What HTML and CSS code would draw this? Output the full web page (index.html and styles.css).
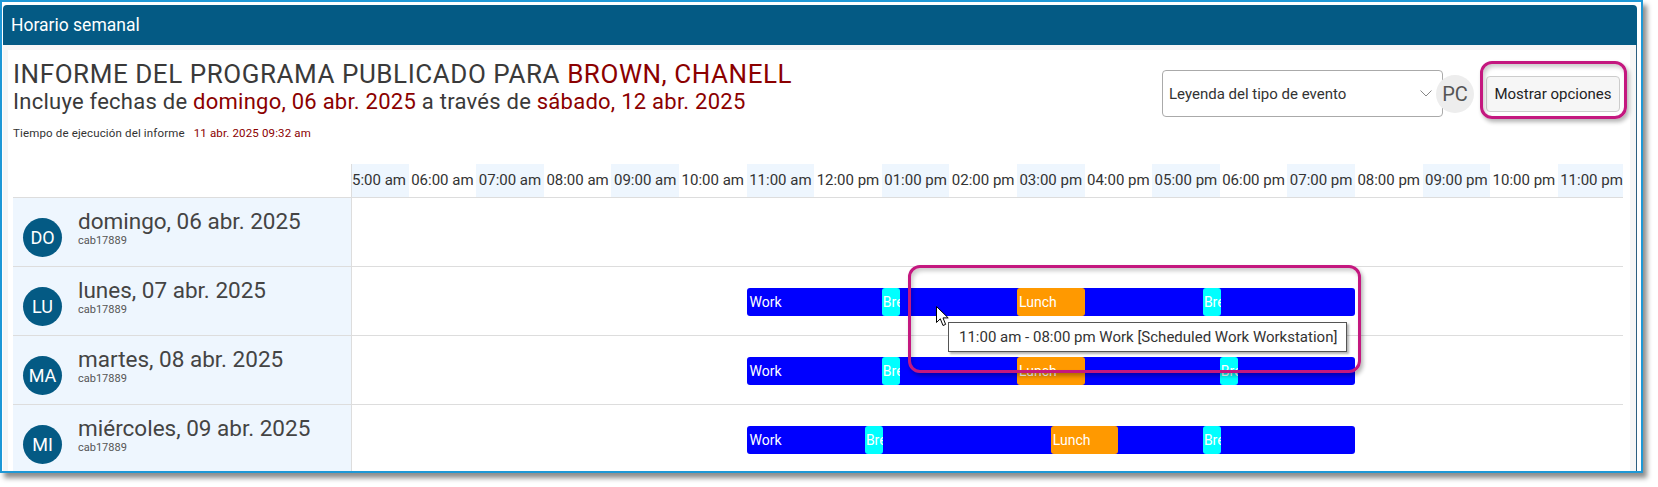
FILE: index.html
```html
<!DOCTYPE html>
<html lang="es">
<head>
    <meta charset="UTF-8">
    <meta name="viewport" content="width=device-width, initial-scale=1.0">
    <title>Horario semanal</title>
    <link rel="stylesheet" href="styles.css">
</head>
<body>
    <div class="frame">
        <div class="window">
            <div class="window-bar">Horario semanal</div>
            <div class="window-body">
                <div class="content">
                    <div class="report-head">
                        <div class="report-title">
                            <h1>INFORME DEL PROGRAMA PUBLICADO PARA <span class="hl">BROWN, CHANELL</span></h1>
                            <h2>Incluye fechas de <span class="hl">domingo, 06 abr. 2025</span> a través de <span class="hl">sábado, 12 abr. 2025</span></h2>
                            <p class="run-time">Tiempo de ejecución del informe <span class="hl">11 abr. 2025 09:32 am</span></p>
                        </div>
                        <div class="report-tools">
                            <div class="legend-select">
                                <span>Leyenda del tipo de evento</span>
                                <svg width="12" height="7" viewBox="0 0 12 7"><polyline points="0.5,0.5 6,6 11.5,0.5" fill="none" stroke="#888" stroke-width="1"/></svg>
                            </div>
                            <div class="user-badge">PC</div>
                            <button class="options-btn">Mostrar opciones</button>
                        </div>
                    </div>

                    <div class="schedule">
                        <div class="corner"></div>
                        <div class="hours">
                            <div class="hours-track">
                                <span>05:00 am</span><span>06:00 am</span><span>07:00 am</span><span>08:00 am</span>
                                <span>09:00 am</span><span>10:00 am</span><span>11:00 am</span><span>12:00 pm</span>
                                <span>01:00 pm</span><span>02:00 pm</span><span>03:00 pm</span><span>04:00 pm</span>
                                <span>05:00 pm</span><span>06:00 pm</span><span>07:00 pm</span><span>08:00 pm</span>
                                <span>09:00 pm</span><span>10:00 pm</span><span>11:00 pm</span>
                            </div>
                        </div>

                        <div class="day">
                            <div class="day-badge">DO</div>
                            <div class="day-text"><div class="day-name">domingo, 06 abr. 2025</div><div class="day-user">cab17889</div></div>
                        </div>
                        <div class="lane"></div>

                        <div class="day">
                            <div class="day-badge">LU</div>
                            <div class="day-text"><div class="day-name">lunes, 07 abr. 2025</div><div class="day-user">cab17889</div></div>
                        </div>
                        <div class="lane">
                            <div class="event work" style="--from:11; --to:20">Work</div>
                            <div class="event break" style="--from:13; --to:13.25">Break</div>
                            <div class="event lunch" style="--from:15; --to:16">Lunch</div>
                            <div class="event break" style="--from:17.75; --to:18">Break</div>
                        </div>

                        <div class="day">
                            <div class="day-badge">MA</div>
                            <div class="day-text"><div class="day-name">martes, 08 abr. 2025</div><div class="day-user">cab17889</div></div>
                        </div>
                        <div class="lane">
                            <div class="event work" style="--from:11; --to:20">Work</div>
                            <div class="event break" style="--from:13; --to:13.25">Break</div>
                            <div class="event lunch" style="--from:15; --to:16">Lunch</div>
                            <div class="event break" style="--from:18; --to:18.25">Break</div>
                        </div>

                        <div class="day">
                            <div class="day-badge">MI</div>
                            <div class="day-text"><div class="day-name">miércoles, 09 abr. 2025</div><div class="day-user">cab17889</div></div>
                        </div>
                        <div class="lane">
                            <div class="event work" style="--from:11; --to:20">Work</div>
                            <div class="event break" style="--from:12.75; --to:13">Break</div>
                            <div class="event lunch" style="--from:15.5; --to:16.5">Lunch</div>
                            <div class="event break" style="--from:17.75; --to:18">Break</div>
                        </div>

                        <div class="day">
                            <div class="day-badge">JU</div>
                            <div class="day-text"><div class="day-name">jueves, 10 abr. 2025</div><div class="day-user">cab17889</div></div>
                        </div>
                        <div class="lane">
                            <div class="event work" style="--from:11; --to:20">Work</div>
                        </div>
                    </div>
                </div>
            </div>
        </div>
    </div>

    <!-- hover tooltip and highlight marks drawn over the page -->
    <div class="callout callout-event"></div>
    <div class="callout callout-options"></div>
    <div class="tooltip">11:00 am - 08:00 pm Work [Scheduled Work Workstation]</div>
    <svg class="pointer" width="14" height="22" viewBox="0 0 14 22">
        <path d="M0.5 0.5 L0.5 16.5 L4.3 12.8 L7 19.5 L9.6 18.4 L7 11.9 L12.2 11.9 Z" fill="#fff" stroke="#000" stroke-width="1" stroke-linejoin="round"/>
    </svg>
</body>
</html>
```

FILE: styles.css
```css
html, body {
    margin: 0;
    height: 487px;
    overflow: hidden;
}
body {
    position: relative;
    background: #fff;
    font-family: Roboto, "Liberation Sans", sans-serif;
    color: #333;
}

/* window frame */
.frame {
    width: 1634px;
    height: 466px;
    padding: 3px 4px 0 1px;
    border: 2px solid #1e98d6;
    background: #fff;
    box-shadow: 4px 5px 5px rgba(0, 0, 0, 0.45);
}
.window {
    height: 100%;
    display: flex;
    flex-direction: column;
    overflow: hidden;
    border-radius: 4px 4px 0 0;
}
.window-bar {
    height: 40px;
    line-height: 40px;
    padding-left: 8px;
    background: #045a84;
    color: #fff;
    font-size: 17.5px;
}
.window-body {
    flex: 1;
    min-height: 0;
    background: #f6f6f6;
    padding: 5px 6px 0 5px;
    border-right: 1px solid #2d5f80;
}
.content {
    height: 100%;
    background: #fff;
    padding: 9px 7px 0 5px;
    overflow: hidden;
}

/* report header */
.report-head {
    display: flex;
    justify-content: space-between;
    align-items: flex-start;
}
.report-title h1 {
    margin: 0;
    font-size: 26px;
    letter-spacing: 0.55px;
    font-weight: normal;
    line-height: 30px;
    color: #3a3a3a;
}
.report-title h2 {
    margin: 0;
    font-size: 22px;
    letter-spacing: 0.25px;
    font-weight: normal;
    line-height: 26px;
    color: #3a3a3a;
}
.hl {
    color: #8b0000;
}
.run-time {
    margin: 10px 0 0;
    font-size: 11.5px;
    letter-spacing: 0.15px;
    line-height: 17px;
}
.run-time .hl {
    margin-left: 6px;
}

.report-tools {
    display: flex;
    align-items: center;
    margin-top: 11px;
    margin-right: 3px;
}
.legend-select {
    width: 281px;
    height: 47px;
    box-sizing: border-box;
    display: flex;
    align-items: center;
    justify-content: space-between;
    padding: 0 10px 0 6px;
    border: 1px solid #aaa;
    border-radius: 4px;
    font-size: 15px;
    color: #333;
}
.user-badge {
    width: 38px;
    height: 38px;
    margin-left: -7px;
    border-radius: 50%;
    background: #ededed;
    color: #555;
    font-size: 20px;
    line-height: 38px;
    text-align: center;
}
.options-btn {
    width: 134px;
    height: 36px;
    margin-left: 12px;
    border: 1px solid #ccc;
    border-radius: 4px;
    background: #f6f6f6;
    color: #222;
    font-family: inherit;
    font-size: 15px;
    padding: 0;
}

/* weekly schedule */
.schedule {
    display: grid;
    grid-template-columns: 338px 1fr;
    margin-top: 22px;
    --hour: 67.6px;
}
.corner {
    border-bottom: 1px solid #ddd;
}
.hours {
    height: 33px;
    overflow: hidden;
    border-left: 1px solid #ddd;
    border-bottom: 1px solid #ddd;
}
.hours-track {
    display: flex;
    margin-left: -11px;
}
.hours-track span {
    flex: 0 0 var(--hour);
    text-align: center;
    font-size: 15px;
    line-height: 33px;
    white-space: nowrap;
}
.hours-track span:nth-child(odd) {
    background: #eef6fe;
}

.day {
    height: 69px;
    display: flex;
    align-items: flex-start;
    padding: 10px 0 0 10px;
    box-sizing: border-box;
    background: #eef6fe;
    border-bottom: 1px solid #ddd;
}
.day-badge {
    width: 39px;
    height: 39px;
    margin-top: 10px;
    border-radius: 50%;
    background: #045a84;
    color: #fff;
    font-size: 18px;
    line-height: 39px;
    text-align: center;
    flex-shrink: 0;
}
.day-text {
    margin-left: 16px;
}
.day-name {
    font-size: 22.5px;
    line-height: 26px;
    color: #444;
}
.day-user {
    font-size: 11px;
    line-height: 13px;
    color: #555;
}

.lane {
    position: relative;
    height: 69px;
    box-sizing: border-box;
    overflow: hidden;
    border-left: 1px solid #ddd;
    border-bottom: 1px solid #ddd;
}
.event {
    position: absolute;
    top: 21px;
    height: 28px;
    left: calc((var(--from) - 5) * var(--hour) - 11px);
    width: calc((var(--to) - var(--from)) * var(--hour));
    box-sizing: border-box;
    padding-left: 3px;
    border-radius: 3px;
    color: #fff;
    font-size: 14px;
    line-height: 28px;
    white-space: nowrap;
    overflow: hidden;
}
.work {
    background: #0000ff;
}
.break {
    min-width: 18px;
    padding-left: 1px;
    background: #00ffff;
}
.lunch {
    padding-left: 2px;
    background: #ff9900;
}

/* overlays */
.callout {
    position: absolute;
    box-sizing: border-box;
    border: 3px solid #c4187f;
    border-radius: 12px;
    box-shadow: 2px 3px 4px rgba(0, 0, 0, 0.3), inset 2px 3px 4px rgba(0, 0, 0, 0.2);
}
.callout-event {
    left: 908px;
    top: 265px;
    width: 453px;
    height: 108px;
}
.callout-options {
    left: 1480px;
    top: 61px;
    width: 147px;
    height: 58px;
}
.tooltip {
    position: absolute;
    left: 948px;
    top: 322px;
    width: 399px;
    height: 30px;
    box-sizing: border-box;
    padding-left: 10px;
    border: 1px solid #555;
    background: #fff;
    box-shadow: 2px 2px 2px rgba(0, 0, 0, 0.3);
    font-size: 15px;
    line-height: 28px;
    color: #333;
    white-space: nowrap;
}
.pointer {
    position: absolute;
    left: 936px;
    top: 306px;
}
```
